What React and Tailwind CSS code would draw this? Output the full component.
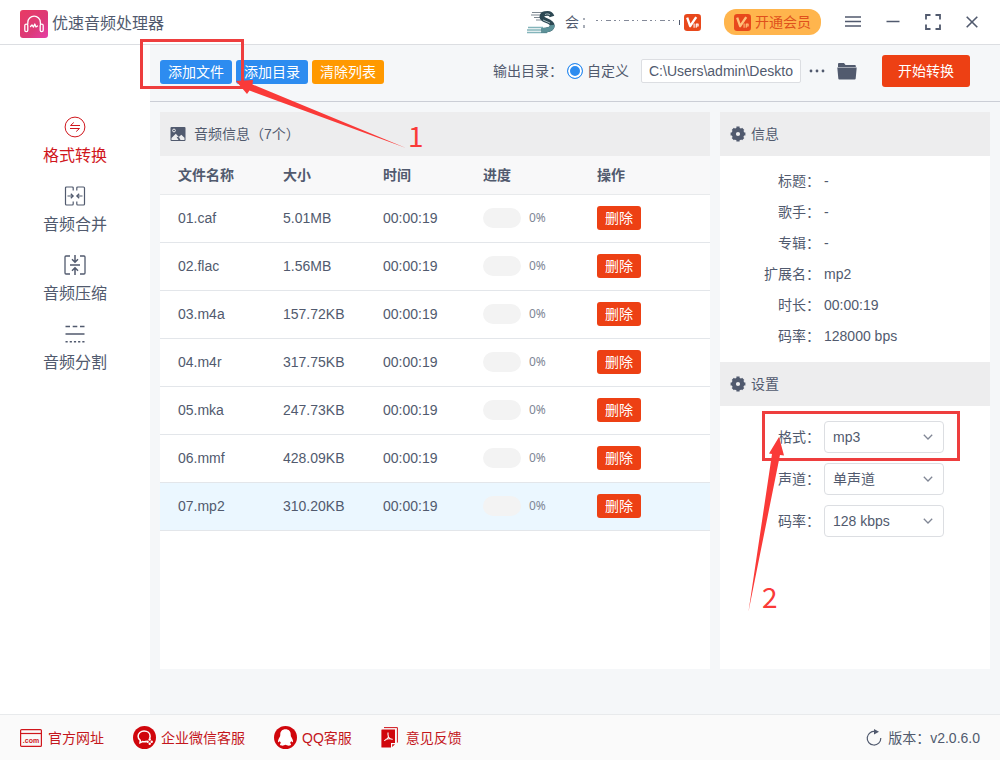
import { useState } from 'react'

const NAV_ITEMS = [
  { label: '格式转换', Icon: ConvertIcon },
  { label: '音频合并', Icon: MergeIcon },
  { label: '音频压缩', Icon: CompressIcon },
  { label: '音频分割', Icon: SplitIcon },
]

const INITIAL_FILES = [
  { name: '01.caf', size: '5.01MB', time: '00:00:19' },
  { name: '02.flac', size: '1.56MB', time: '00:00:19' },
  { name: '03.m4a', size: '157.72KB', time: '00:00:19' },
  { name: '04.m4r', size: '317.75KB', time: '00:00:19' },
  { name: '05.mka', size: '247.73KB', time: '00:00:19' },
  { name: '06.mmf', size: '428.09KB', time: '00:00:19' },
  { name: '07.mp2', size: '310.20KB', time: '00:00:19' },
]

const INFO = [
  ['标题', '-'],
  ['歌手', '-'],
  ['专辑', '-'],
  ['扩展名', 'mp2'],
  ['时长', '00:00:19'],
  ['码率', '128000 bps'],
]

const SETTINGS = [
  { id: 'format', label: '格式', options: ['mp3', 'wav', 'flac', 'm4a'] },
  { id: 'channel', label: '声道', options: ['单声道', '立体声'] },
  { id: 'bitrate', label: '码率', options: ['128 kbps', '192 kbps', '320 kbps'] },
]

const FOOTER_LINKS = [
  { label: '官方网址', Icon: SiteIcon, gap: 'gap-1.5' },
  { label: '企业微信客服', Icon: WechatIcon, gap: 'gap-[5px]' },
  { label: 'QQ客服', Icon: QQIcon, gap: 'gap-[5px]' },
  { label: '意见反馈', Icon: FeedbackIcon, gap: 'gap-2' },
]

/* ---------- icons ---------- */

function Logo() {
  return (
    <svg width="28" height="28" viewBox="0 0 28 28" fill="none">
      <defs>
        <linearGradient id="logo" x1="0" y1="0" x2="1" y2="1">
          <stop offset="0" stopColor="#e93a63" />
          <stop offset="0.6" stopColor="#dc3a78" />
          <stop offset="1" stopColor="#e63fa8" />
        </linearGradient>
      </defs>
      <rect width="28" height="28" rx="3" fill="url(#logo)" />
      <g stroke="#fff" strokeWidth="1.3" strokeLinecap="round" strokeLinejoin="round">
        <path d="M7.800 14V12.500a6.300 6.300 0 0 1 12.600 0V14" />
        <rect x="4.800" y="14.200" width="3" height="7.400" rx="1.400" />
        <rect x="20.200" y="14.200" width="3" height="7.400" rx="1.400" />
        <path d="M10.500 16.500l1.500-1.500 1.500 2 1.300-3 1.200 3 1.500-1" />
      </g>
    </svg>
  )
}

function Avatar() {
  return (
    <svg width="28" height="24" viewBox="0 0 28 24" fill="none">
      <path d="M5 2.500h13M4 5h10M7 7.500h7M9 10h6" stroke="#7d8790" strokeWidth="1" />
      <path d="M1 17.500h15M0 20h18M0 22.500h20" stroke="#84b5bb" strokeWidth="1.300" />
      <path
        d="M25 6.500c-1-3-4-3.500-7-2.800-3.500.8-4 4-1.500 5.500 3 1.700 8.500 2.300 8.700 6.300.2 3.500-4.200 5-10.700 5"
        stroke="#2d4853"
        strokeWidth="4.800"
      />
      <path d="M25.200 15c.4 3.800-4.200 5.500-10.700 5.500" stroke="#5d9299" strokeWidth="4.800" />
      <path d="M18 4.500c2-1 4-.6 5 .5M16 10l7 3" stroke="#a9bcc0" strokeWidth="1" />
    </svg>
  )
}

function VipIcon({ light }) {
  return (
    <svg width="17" height="17" viewBox="0 0 16 16" fill="none">
      <rect width="16" height="16" rx="3" fill="#e8481c" />
      <g stroke={light ? '#fff' : '#ffc27a'} strokeLinejoin="round">
        <path d="M3 3.500l2.800 8L11.500 3" strokeWidth="2.200" />
        <path d="M9.500 9v4M11.500 13V9.500h1.800v1.800h-1.800" strokeWidth="1" />
      </g>
    </svg>
  )
}

function MenuIcon() {
  return (
    <svg width="16" height="16" viewBox="0 0 16 16" stroke="currentColor" strokeWidth="1.500">
      <path d="M0 3h16M0 7.500h16M0 12h16" />
    </svg>
  )
}

function MinusIcon() {
  return (
    <svg width="14" height="16" viewBox="0 0 14 16" stroke="currentColor" strokeWidth="1.500">
      <path d="M0.500 7.500h13" />
    </svg>
  )
}

function FullscreenIcon() {
  return (
    <svg width="16" height="16" viewBox="0 0 16 16" fill="none" stroke="currentColor" strokeWidth="1.800">
      <path d="M1 5.500V1h4.500M10.500 1H15v4.500M15 10.500V15h-4.500M5.500 15H1v-4.500" />
    </svg>
  )
}

function CloseIcon() {
  return (
    <svg width="12" height="12" viewBox="0 0 12 12" stroke="currentColor" strokeWidth="1.600">
      <path d="M.7.7l10.600 10.600M11.300.7L.7 11.300" />
    </svg>
  )
}

function ConvertIcon() {
  return (
    <svg width="22" height="22" viewBox="0 0 22 22" fill="none" stroke="currentColor" strokeWidth="1">
      <circle cx="11" cy="11" r="9.900" />
      <path d="M16 9.500H6.500L9.800 6.500M6 12.500h9.500L12.200 15.500" />
    </svg>
  )
}

function MergeIcon() {
  return (
    <svg width="22" height="22" viewBox="0 0 22 22" fill="none" stroke="currentColor" strokeWidth="1.200">
      <path d="M9.200 5.500V3q0-1-1-1H2.500q-1 0-1 1v16q0 1 1 1h5.700q1 0 1-1v-2.500M12.800 5.500V3q0-1 1-1h5.700q1 0 1 1v16q0 1-1 1h-5.700q-1 0-1-1v-2.500" />
      <path d="M3.500 11H9M6.800 8.700L9.200 11l-2.400 2.300M18.500 11H13M15.200 8.700L12.800 11l2.400 2.300" />
    </svg>
  )
}

function CompressIcon() {
  return (
    <svg width="22" height="22" viewBox="0 0 22 22" fill="none" stroke="currentColor" strokeWidth="1.300">
      <path d="M6 2H2q-1 0-1 1v16q0 1 1 1h4M16 2h4q1 0 1 1v16q0 1-1 1h-4" />
      <path d="M6 11h10M11 1v7M8 5.200l3 3 3-3M11 21v-7M8 16.800l3-3 3 3" strokeWidth="1.500" />
    </svg>
  )
}

function SplitIcon() {
  return (
    <svg width="22" height="22" viewBox="0 0 22 22" fill="none" stroke="currentColor" strokeWidth="1.400">
      <path d="M1.500 3.500h4.500M8.700 3.500h4.600M16 3.500h4.500M1.500 11h19" />
      <path d="M1.500 18.800h19" strokeDasharray="2.200 2" />
    </svg>
  )
}

function FolderIcon() {
  return (
    <svg width="20" height="18" viewBox="0 0 20 18" fill="currentColor">
      <path d="M1 5V2q0-1 1-1h5l1.500 2H18q.8 0 .8 1v1z" />
      <path d="M.3 5.600h19.400L18.700 16.500q-.1 1-1 1H2.300q-.9 0-1-1z" />
    </svg>
  )
}

function PictureIcon() {
  return (
    <svg width="16" height="16" viewBox="0 0 16 16">
      <rect x=".5" y="1" width="15" height="14" rx="1" fill="#515a6e" />
      <circle cx="4" cy="4.500" r="1.400" fill="none" stroke="#ededee" />
      <path d="M1.500 14V12l4.300-4.200 3 3.200 2.500-2.200 3.200 3V14z" fill="#ededee" />
      <path d="M8.500 14l-2-3.200 2.500.4 1.500 2.800z" fill="#515a6e" />
    </svg>
  )
}

function GearIcon() {
  return (
    <svg width="16" height="16" viewBox="0 0 16 16" fill="none" stroke="#515a6e">
      <circle cx="8" cy="8" r="4.200" strokeWidth="4.200" />
      <path
        d="M8 .6v2.400M8 13v2.400M.6 8H3M13 8h2.400M2.800 2.800l1.600 1.600M11.600 11.600l1.600 1.600M2.800 13.200l1.600-1.600M11.600 4.400l1.600-1.600"
        strokeWidth="3.200"
      />
    </svg>
  )
}

function ChevronIcon() {
  return (
    <svg width="10" height="6" viewBox="0 0 10 6" fill="none" stroke="#808695" strokeWidth="1.300">
      <path d="M.8.8L5 5 9.200.8" />
    </svg>
  )
}

function SiteIcon() {
  return (
    <svg width="22" height="18" viewBox="0 0 22 18" fill="none" stroke="#d0161c">
      <rect x=".6" y=".6" width="20.800" height="16.800" rx="1" strokeWidth="1.200" />
      <path d="M1 4.500h20" strokeWidth="1.200" />
      <text x="11" y="14" textAnchor="middle" fontSize="7" fontWeight="700" stroke="none" fill="#d0161c" fontFamily="Liberation Sans Narrow, Liberation Sans, sans-serif">
        .com
      </text>
    </svg>
  )
}

function WechatIcon() {
  return (
    <svg width="23" height="23" viewBox="0 0 23 23" fill="none">
      <circle cx="11.500" cy="11.500" r="11.500" fill="#d0060c" />
      <path d="M16.500 12.600c.5-1 .6-1.700.6-2.400 0-3.200-2.700-5.200-6-5.200s-6 2.200-6 5.200c0 1.700.8 3.200 2.200 4.200L7 16.800l2.500-1.300c1.500.4 3 .3 4.300-.2" stroke="#fff" strokeWidth="1.500" />
      <g fill="#fff">
        <circle cx="16.700" cy="13.500" r="1.200" />
        <circle cx="18.700" cy="15.700" r="1.200" />
        <circle cx="16.700" cy="17.800" r="1.200" />
        <circle cx="14.600" cy="15.700" r="1.200" />
      </g>
    </svg>
  )
}

function QQIcon() {
  return (
    <svg width="23" height="23" viewBox="0 0 23 23">
      <circle cx="11.500" cy="11.500" r="11.500" fill="#d0060c" />
      <path
        d="M11.500 3.300c-3.400 0-5.200 2.200-5.200 5 0 .8-.1 1.700-.3 2.100-1 1.600-2 3.300-2 5 0 1.300.9 1 1.800-.5.3.9.7 1.500 1.400 2.200-1 .4-1.400 1-1.200 1.700.5 1.200 4.200 1 5.500 0 1.300 1 5 1.200 5.500 0 .2-.7-.2-1.300-1.200-1.700.7-.7 1.100-1.300 1.400-2.200.9 1.500 1.800 1.800 1.800.5 0-1.700-1-3.400-2-5-.2-.4-.3-1.300-.3-2.100 0-2.800-1.800-5-5.200-5z"
        fill="#fff"
      />
    </svg>
  )
}

function FeedbackIcon() {
  return (
    <svg width="17" height="21" viewBox="0 0 17 21" fill="none">
      <path d="M3 .6h13.400v15" stroke="#d0161c" strokeWidth="1" />
      <path d="M1 2.500h13V16h-4v4.500H1q-.6 0-.6-.6V3.100q0-.6.600-.6z" fill="#d0060c" />
      <path d="M11.200 17.200H14L11.200 20z" fill="#d0060c" />
      <path d="M7.200 5.500c-.8 1.800.2 3.500.2 4.200 0 1.500-2.200 2.800-4.200 4M7.400 10c1 1.600 2.400 2.200 4.200 2.400M4.500 12.500c1.800-.8 4-1 6-.5" stroke="#fff" strokeWidth="1.100" />
    </svg>
  )
}

function RefreshIcon() {
  return (
    <svg width="16" height="17" viewBox="0 0 16 17" fill="none">
      <path d="M9.500 2.600A6.800 6.800 0 1 0 14.800 9" stroke="#515a6e" strokeWidth="1.200" />
      <path d="M8 0l5 2.800L8 5.500z" fill="#515a6e" />
    </svg>
  )
}

/* ---------- tutorial marks ---------- */

function AddFileMark() {
  return (
    <div className="pointer-events-none absolute -left-5 -top-[19px] z-10">
      <div className="h-[50px] w-[104px] border-[3px] border-[#ee3e3e]" />
      <svg className="absolute left-[94px] top-[38px]" width="174" height="72" viewBox="0 0 174 72" fill="#fa3a38">
        <path d="M2 4L19 3 18.500 7.500 172 71 15.500 13.500 13 17z" />
      </svg>
      <span className="absolute left-[268px] top-20 font-['Noto_Sans_CJK_SC',sans-serif] text-[28px] leading-8 text-[#fa3a38]">1</span>
    </div>
  )
}

function FormatMark() {
  return (
    <div className="pointer-events-none absolute -top-2.5 left-[42px] z-10">
      <div className="h-[50px] w-[198px] border-[3px] border-[#ee3e3e]" />
      <svg className="absolute -left-4 top-6" width="40" height="180" viewBox="0 0 40 180" fill="#fa3a38">
        <path d="M33 2L23 18.500 26 19 2.500 176.500 34 20 38 20.500z" />
      </svg>
      <span className="absolute left-0 top-[169px] font-['Noto_Sans_CJK_SC',sans-serif] text-[28px] leading-8 text-[#fa3a38]">2</span>
    </div>
  )
}

/* ---------- page parts ---------- */

function TitleBar() {
  return (
    <header className="flex h-[45px] items-center border-b border-[#dcdee2] bg-white pl-5 pr-[22px]">
      <div className="flex items-center gap-1 pt-1">
        <Logo />
        <h1 className="text-base leading-6">优速音频处理器</h1>
      </div>
      <div className="ml-auto flex items-center">
        <Avatar />
        <span className="ml-2.5 text-sm">会</span>
        <svg className="mx-1" width="97" height="16" viewBox="0 0 97 16" stroke="#515a6e">
          <path d="M1 4v2M1 11v3M96.500 6v5" strokeWidth="1" />
          <path d="M13 6.500h80" strokeWidth="1" strokeDasharray="2 3 1 4 5 3" opacity=".7" />
        </svg>
        <VipIcon light />
        <button className="ml-[23px] flex h-[26px] items-center gap-1 rounded-xl bg-[#ffb54d] px-2.5 text-sm text-[#e0501c]">
          <VipIcon />
          开通会员
        </button>
      </div>
      <div className="ml-6 flex items-center gap-[25px]">
        <button aria-label="菜单"><MenuIcon /></button>
        <button aria-label="最小化"><MinusIcon /></button>
        <button aria-label="最大化"><FullscreenIcon /></button>
        <button aria-label="关闭"><CloseIcon /></button>
      </div>
    </header>
  )
}

function Sidebar({ active, onSelect }) {
  return (
    <nav className="flex w-[150px] shrink-0 flex-col items-center gap-[17px] bg-white pt-[71px]">
      {NAV_ITEMS.map(({ label, Icon }) => (
        <button
          key={label}
          onClick={() => onSelect(label)}
          className={`flex flex-col items-center gap-1.5 text-base leading-6 ${
            active === label ? 'text-[#d0161c]' : 'text-[#515a6e]'
          }`}
        >
          <Icon />
          {label}
        </button>
      ))}
    </nav>
  )
}

function Toolbar({ onClear }) {
  return (
    <div className="flex h-[57px] items-center border-b border-[#cbced6] pb-1 pl-2.5 pr-[30px] text-sm">
      <div className="relative flex gap-1 pt-0.5 text-white">
        <button className="h-6 rounded-[3px] bg-[#2d8cf0] px-2">添加文件</button>
        <button className="h-6 rounded-[3px] bg-[#2d8cf0] px-2">添加目录</button>
        <button className="h-6 rounded-[3px] bg-[#ff9900] px-2" onClick={onClear}>清除列表</button>
        <AddFileMark />
      </div>
      <div className="ml-auto flex items-center">
        <span>输出目录：</span>
        <label className="ml-1 flex items-center gap-1">
          <input
            type="radio"
            name="output"
            defaultChecked
            className="size-4 appearance-none rounded-full border border-[#2d8cf0] bg-white checked:bg-[#2d8cf0] checked:shadow-[inset_0_0_0_2px_#fff]"
          />
          自定义
        </label>
        <input
          type="text"
          aria-label="输出目录"
          defaultValue="C:\Users\admin\Deskto"
          className="ml-3 h-6 w-40 rounded-[2px] border border-[#dcdee2] bg-white px-[7px]"
        />
        <button aria-label="浏览" className="ml-2">
          <svg width="16" height="4" viewBox="0 0 16 4" fill="currentColor">
            <circle cx="2" cy="2" r="1.400" />
            <circle cx="8" cy="2" r="1.400" />
            <circle cx="14" cy="2" r="1.400" />
          </svg>
        </button>
        <button aria-label="打开目录" className="ml-3"><FolderIcon /></button>
        <button className="ml-[25px] h-8 rounded-[3px] bg-[#ed4014] px-4 text-white">开始转换</button>
      </div>
    </div>
  )
}

function PanelHeader({ icon, children, className = 'gap-[5px] px-2.5' }) {
  return (
    <h2 className={`flex h-11 items-center bg-[#ededee] text-sm ${className}`}>
      {icon}
      {children}
    </h2>
  )
}

function FileTable({ files, selected, onSelect, onDelete }) {
  return (
    <section className="flex-1 bg-white">
      <PanelHeader icon={<PictureIcon />} className="gap-2 px-2.5">
        音频信息（{files.length}个）
      </PanelHeader>
      <table className="w-full table-fixed text-left text-sm">
        <thead>
          <tr className="h-[38px] border-b border-[#e8eaec] bg-[#f8f8f9]">
            <th className="w-[105px] pl-[18px] font-bold">文件名称</th>
            <th className="w-[100px] pl-[18px] font-bold">大小</th>
            <th className="w-[100px] pl-[18px] font-bold">时间</th>
            <th className="w-[114px] pl-[18px] font-bold">进度</th>
            <th className="pl-[18px] font-bold">操作</th>
          </tr>
        </thead>
        <tbody>
          {files.map((file) => (
            <tr
              key={file.name}
              onClick={() => onSelect(file.name)}
              className={`h-12 border-b border-[#e3e6ea] ${selected === file.name ? 'bg-[#ebf7ff]' : ''}`}
            >
              <td className="pl-[18px]">{file.name}</td>
              <td className="pl-[18px]">{file.size}</td>
              <td className="pl-[18px]">{file.time}</td>
              <td className="pl-[18px]">
                <div className="flex items-center gap-2">
                  <div className="h-5 w-[38px] rounded-full bg-[#f3f3f3]" />
                  <span className="font-['Noto_Sans',sans-serif] text-xs text-[#808695]">0%</span>
                </div>
              </td>
              <td className="pl-[18px]">
                <button
                  onClick={() => onDelete(file.name)}
                  className="block h-6 rounded-[3px] bg-[#ed4014] px-2 text-white"
                >
                  删除
                </button>
              </td>
            </tr>
          ))}
        </tbody>
      </table>
    </section>
  )
}

function SidePanel() {
  return (
    <aside className="w-[270px] shrink-0 bg-white text-sm">
      <PanelHeader icon={<GearIcon />}>信息</PanelHeader>
      <dl className="pb-[11px] pt-[9px]">
        {INFO.map(([label, value]) => (
          <div key={label} className="flex h-[31px] items-center gap-1">
            <dt className="w-[100px] text-right">{label}：</dt>
            <dd>{value}</dd>
          </div>
        ))}
      </dl>
      <PanelHeader icon={<GearIcon />}>设置</PanelHeader>
      <div className="flex flex-col gap-2.5 pt-[15px]">
        {SETTINGS.map(({ id, label, options }) => (
          <div key={id} className="relative flex items-center gap-1">
            <label htmlFor={id} className="w-[100px] text-right">{label}：</label>
            <div className="relative">
              <select
                id={id}
                className="block h-8 w-[120px] appearance-none rounded border border-[#dcdee2] bg-white pl-2 pr-6"
              >
                {options.map((option) => (
                  <option key={option}>{option}</option>
                ))}
              </select>
              <span className="pointer-events-none absolute inset-y-0 right-[11px] flex items-center">
                <ChevronIcon />
              </span>
            </div>
            {id === 'format' && <FormatMark />}
          </div>
        ))}
      </div>
    </aside>
  )
}

function Footer() {
  return (
    <footer className="flex h-[46px] items-center border-t border-[#e8eaec] bg-[#fafafa] px-5 text-sm">
      <div className="flex items-center gap-[29px] text-[#c4161c]">
        {FOOTER_LINKS.map(({ label, Icon, gap }) => (
          <a key={label} href="#" className={`flex items-center ${gap}`}>
            <Icon />
            {label}
          </a>
        ))}
      </div>
      <div className="ml-auto flex items-center gap-1.5">
        <RefreshIcon />
        版本：v2.0.6.0
      </div>
    </footer>
  )
}

export default function App() {
  const [active, setActive] = useState('格式转换')
  const [files, setFiles] = useState(INITIAL_FILES)
  const [selected, setSelected] = useState('07.mp2')

  return (
    <div className="flex min-h-screen flex-col bg-[#f5f7f9] font-['Liberation_Sans','Noto_Sans_CJK_SC',sans-serif] text-[#515a6e]">
      <TitleBar />
      <div className="flex flex-1">
        <Sidebar active={active} onSelect={setActive} />
        <main className="flex min-w-0 flex-1 flex-col">
          <Toolbar onClear={() => setFiles([])} />
          <div className="flex flex-1 gap-2.5 px-2.5 pb-[45px] pt-2.5">
            <FileTable
              files={files}
              selected={selected}
              onSelect={setSelected}
              onDelete={(name) => setFiles(files.filter((f) => f.name !== name))}
            />
            <SidePanel />
          </div>
        </main>
      </div>
      <Footer />
    </div>
  )
}
